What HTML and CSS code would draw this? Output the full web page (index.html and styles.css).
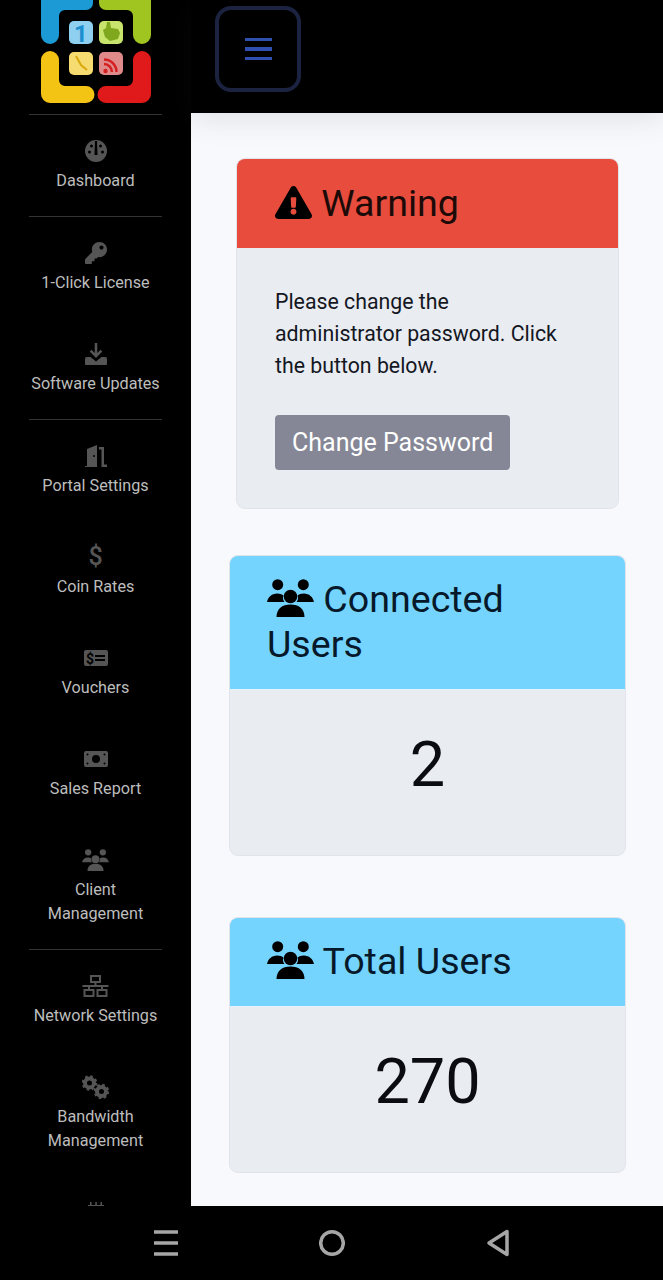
FILE: index.html
```html
<!DOCTYPE html>
<html lang="en">
<head>
<meta charset="UTF-8" />
<meta name="viewport" content="width=device-width, initial-scale=1.0" />
<title>Dashboard</title>
<link rel="stylesheet" href="styles.css">
</head>
<body>
<svg class="sprite" aria-hidden="true">
  <symbol id="users" viewBox="0 0 47 38">
    <circle cx="10.7" cy="5.7" r="5.5"/>
    <circle cx="36.3" cy="5.7" r="5.5"/>
    <circle cx="23.5" cy="17.5" r="6.8"/>
    <path d="M0 23C1 18 5 14.5 10 14.5c3 0 5 .7 6.500 2-1 2.500-.5 4.500 1 6.500z"/>
    <path d="M47 23C46 18 42 14.500 37 14.500c-3 0-5 .7-6.500 2 1 2.500.5 4.500-1 6.500z"/>
    <path d="M9.500 38C9.500 30 15 25.500 23.500 25.500S37.500 30 37.500 38z"/>
  </symbol>
</svg>
<div class="app">
  <aside class="sidebar">
    <svg class="logo" viewBox="0 0 110 104" width="110" height="104">
      <path fill="#1c9ad6" d="M0-20H52V3a7 7 0 0 1-7 7H24a6 6 0 0 0-6 6V35a9 9 0 0 1-18 0z"/>
      <path fill="#a0c520" d="M110-20H58V3a7 7 0 0 0 7 7H86a6 6 0 0 1 6 6V35a9 9 0 0 0 18 0z"/>
      <path fill="#f4c414" d="M0 60a9 9 0 0 1 18 0V80a6 6 0 0 0 6 6H45a8.500 8.500 0 0 1 0 17H9a9 9 0 0 1-9-9z"/>
      <path fill="#e01a1a" d="M110 60a9 9 0 0 0-18 0V80a6 6 0 0 1-6 6H65a8.500 8.500 0 0 0 0 17H101a9 9 0 0 0 9-9z"/>
      <rect x="28" y="21" width="24" height="23" rx="5" fill="#8fd0f0"/>
      <text x="40" y="42" class="logo-one">1</text>
      <rect x="58" y="21" width="24" height="23" rx="5" fill="#c8e46c"/>
      <path fill="#7fa81e" d="M62 30l3-2 1-6 3 0 1 6 7 1 2 4-2 6-8 2-5-4z"/>
      <rect x="28" y="52" width="24" height="23" rx="5" fill="#f6dc70"/>
      <path fill="none" stroke="#d8a80c" stroke-width="2" d="M35 56l5 9 6 5"/>
      <rect x="58" y="52" width="24" height="23" rx="5" fill="#e08a8a"/>
      <g fill="none" stroke="#d42020" stroke-width="2.500">
        <path d="M63 64a8 8 0 0 1 8 8"/>
        <path d="M63 59.500a12.500 12.500 0 0 1 12.500 12.500"/>
      </g>
      <circle cx="64.500" cy="71" r="2.200" fill="#d42020"/>
    </svg>
    <hr class="rule rule-first">

    <a class="item">
      <svg class="ico" viewBox="0 0 24 24">
        <circle cx="12" cy="12" r="11"/>
        <g fill="#000"><circle cx="5.500" cy="13" r="1.500"/><circle cx="7.500" cy="7" r="1.500"/><circle cx="16.500" cy="7" r="1.500"/><circle cx="18.500" cy="13" r="1.500"/></g>
        <path fill="#000" d="M11 2h2l.5 14h-3z"/>
      </svg>
      <span>Dashboard</span>
    </a>
    <hr class="rule">

    <a class="item">
      <svg class="ico ico-key" viewBox="0 0 512 512"><path d="M512 176.001C512 273.203 433.202 352 336 352c-11.22 0-22.19-1.062-32.827-3.069l-24.012 27.014A23.999 23.999 0 0 1 261.223 384H224v40c0 13.255-10.745 24-24 24h-40v40c0 13.255-10.745 24-24 24H24c-13.255 0-24-10.745-24-24v-78.059c0-6.365 2.529-12.47 7.029-16.971l161.802-161.802C163.108 213.814 160 195.271 160 176 160 78.798 238.797.001 335.999 0 433.488-.001 512 78.511 512 176.001zM336 128c0 26.51 21.49 48 48 48s48-21.49 48-48-21.49-48-48-48-48 21.49-48 48z"/></svg>
      <span>1-Click License</span>
    </a>

    <a class="item">
      <svg class="ico" viewBox="0 0 24 24">
        <path d="M10.700 1h2.600v10l3.200-3.200 1.800 1.800-6.300 6.300-6.300-6.300 1.800-1.800 3.200 3.200z"/>
        <path d="M1 17a2 2 0 0 1 2-2h3.500l5.500 4.500 5.500-4.500H21a2 2 0 0 1 2 2v5a1 1 0 0 1-1 1H2a1 1 0 0 1-1-1z"/>
      </svg>
      <span>Software Updates</span>
    </a>
    <hr class="rule">

    <a class="item">
      <svg class="ico" viewBox="0 0 24 24">
        <path d="M1 22h2V5l10-4v22H1zM15 3h5v17.500h3V23h-5.500V5.500H15z"/>
        <circle cx="10" cy="12" r="1" fill="#000"/>
      </svg>
      <span>Portal Settings</span>
    </a>

    <a class="item">
      <span class="ico ico-dollar">$</span>
      <span>Coin Rates</span>
    </a>

    <a class="item">
      <svg class="ico" viewBox="0 0 24 24">
        <rect x="0" y="4" width="24" height="16" rx="2"/>
        <text x="6" y="17.500" class="voucher-sign">$</text>
        <path fill="#000" d="M11 9h10v2H11zM11 13h10v2H11z"/>
      </svg>
      <span>Vouchers</span>
    </a>

    <a class="item">
      <svg class="ico" viewBox="0 0 24 24">
        <rect x="0" y="4" width="24" height="16" rx="2"/>
        <g fill="#000"><circle cx="12" cy="12" r="4"/><circle cx="3.500" cy="7.500" r="1"/><circle cx="20.500" cy="7.500" r="1"/><circle cx="3.500" cy="16.500" r="1"/><circle cx="20.500" cy="16.500" r="1"/></g>
      </svg>
      <span>Sales Report</span>
    </a>

    <a class="item">
      <svg class="ico ico-wide" viewBox="0 0 47 38"><use href="#users"/></svg>
      <span>Client<br>Management</span>
    </a>
    <hr class="rule">

    <a class="item">
      <svg class="ico ico-wide" viewBox="0 0 26 24">
        <g fill="none" stroke="#555" stroke-width="2">
          <rect x="8.500" y="2" width="9" height="6"/>
          <rect x="2" y="16" width="9" height="6"/>
          <rect x="15" y="16" width="9" height="6"/>
          <path d="M13 8v4M0 12h26M6.500 12v4M19.500 12v4"/>
        </g>
      </svg>
      <span>Network Settings</span>
    </a>

    <a class="item">
      <svg class="ico ico-wide" viewBox="0 0 26 24">
        <g fill="none" stroke="#555">
          <circle cx="7" cy="8" r="4.500" stroke-width="4"/>
          <circle cx="7" cy="8" r="6.500" stroke-width="2.500" stroke-dasharray="2.500 2.600"/>
          <circle cx="19" cy="16.500" r="4.500" stroke-width="4"/>
          <circle cx="19" cy="16.500" r="6.500" stroke-width="2.500" stroke-dasharray="2.500 2.600"/>
        </g>
      </svg>
      <span>Bandwidth<br>Management</span>
    </a>

    <a class="item">
      <svg class="ico" viewBox="0 0 24 24">
        <path d="M4 5h16v2H4zM6 2h1.500v3H6zM11.300 2h1.500v3h-1.500zM16.500 2H18v3h-1.500z"/>
      </svg>
    </a>
  </aside>

  <header class="topbar">
    <button class="menu-btn"><i></i><i></i><i></i></button>
  </header>

  <main class="content">
    <section class="card card-warning">
      <h2 class="card-head head-red">
        <svg class="head-ico ico-warn" viewBox="0 0 576 512"><path d="M569.517 440.013C587.975 472.007 564.806 512 527.94 512H48.054c-36.937 0-59.999-40.055-41.577-71.987L246.423 23.985c18.467-32.009 64.72-31.951 83.154 0l239.94 416.028zM288 354c-25.405 0-46 20.595-46 46s20.595 46 46 46 46-20.595 46-46-20.595-46-46-46zm-43.673-165.346l7.418 136c.347 6.364 5.609 11.346 11.982 11.346h48.546c6.373 0 11.635-4.982 11.982-11.346l7.418-136c.375-6.874-5.098-12.654-11.982-12.654h-63.383c-6.884 0-12.356 5.78-11.981 12.654z"/></svg>
        Warning
      </h2>
      <div class="warn-body">
        <p>Please change the administrator password. Click the button below.</p>
        <a class="btn">Change Password</a>
      </div>
    </section>

    <section class="card">
      <h2 class="card-head head-blue">
        <svg class="head-ico ico-users" viewBox="0 0 47 38"><use href="#users"/></svg>
        Connected Users
      </h2>
      <div class="stat-value">2</div>
    </section>

    <section class="card">
      <h2 class="card-head head-blue">
        <svg class="head-ico ico-users" viewBox="0 0 47 38"><use href="#users"/></svg>
        Total Users
      </h2>
      <div class="stat-value">270</div>
    </section>
  </main>

  <nav class="navbar">
    <svg class="nav-ico" viewBox="0 0 26 28">
      <path d="M1 3h24M1 14h24M1 25h24" fill="none" stroke="#a6a6a6" stroke-width="3.500"/>
    </svg>
    <svg class="nav-ico" viewBox="0 0 26 28">
      <circle cx="13" cy="14" r="11.300" fill="none" stroke="#a6a6a6" stroke-width="3.500"/>
    </svg>
    <svg class="nav-ico" viewBox="0 0 26 28">
      <path d="M22 2.500V25.500L4 14z" fill="none" stroke="#a6a6a6" stroke-width="3.500" stroke-linejoin="round"/>
    </svg>
  </nav>
</div>
</body>
</html>
```

FILE: styles.css
```css
html, body {
  margin: 0;
  height: 100%;
  overflow: hidden;
}
body {
  font-family: Roboto, "Liberation Sans", sans-serif;
  background-color: #000;
}
.sprite {
  display: none;
}
.app {
  display: grid;
  grid-template-columns: 191px 1fr;
  grid-template-rows: 113px 1093px 74px;
  height: 1280px;
}

/* sidebar */
.sidebar {
  grid-row: 1 / 3;
  overflow: hidden;
  background-color: #000;
  display: flex;
  flex-direction: column;
}
.logo {
  display: block;
  flex: none;
  margin: 0 auto 10px;
}
.logo-one {
  font-family: Roboto, sans-serif;
  font-size: 24px;
  font-weight: 700;
  fill: #1c8fd0;
  text-anchor: middle;
}
.rule {
  flex: none;
  width: 133px;
  height: 1px;
  margin: 0 0 0 29px;
  border: 0;
  background-color: #333;
}
.item {
  flex: none;
  display: flex;
  flex-direction: column;
  align-items: center;
  padding: 24px 0 23px;
  gap: 6px;
  font-size: 16.200px;
  line-height: 24px;
  color: #bdbdbd;
  text-align: center;
}
.ico {
  display: block;
  width: 24px;
  height: 24px;
  fill: #555;
}
.ico-key {
  padding: 1px;
  box-sizing: border-box;
}
.ico-wide {
  width: 27px;
}
.ico-dollar {
  font-size: 25px;
  line-height: 24px;
  color: #555;
  font-weight: 500;
  text-align: center;
}
.voucher-sign {
  font-family: Roboto, sans-serif;
  font-size: 14px;
  font-weight: 700;
  fill: #000;
  text-anchor: middle;
}

/* top bar */
.topbar {
  background-color: #000;
  padding: 6px 0 0 24px;
  position: relative;
  z-index: 1;
  box-shadow: 0 6px 28px rgba(58, 59, 69, 0.12);
}
.menu-btn {
  display: flex;
  flex-direction: column;
  justify-content: center;
  align-items: center;
  gap: 6px;
  box-sizing: border-box;
  width: 86px;
  height: 86px;
  padding: 0;
  background: none;
  border: 4px solid #1b2340;
  border-radius: 16px;
}
.menu-btn i {
  display: block;
  width: 27px;
  height: 3.500px;
  background-color: #3050b0;
}

/* main */
.content {
  background-color: #f8f9fc;
  padding: 45px 37px 0 38px;
  overflow: hidden;
}
.card {
  box-sizing: border-box;
  border: 1px solid #e1e4ec;
  border-radius: 9px;
  overflow: hidden;
  background-color: #e9ecf1;
  margin-bottom: 61px;
}
.card-warning {
  margin: 0 7px 46px;
}
.card-head {
  margin: 0;
  padding: 22px 37px;
  font-size: 37.600px;
  font-weight: 400;
  line-height: 45px;
}
.head-red {
  background-color: #e74c3c;
  color: #1c0a08;
  padding-left: 38px;
}
.head-blue {
  background-color: #74d4fe;
  color: #06192b;
  padding-top: 21px;
  border-bottom: 1px solid #e4f4fc;
}
.head-ico {
  fill: #000;
}
.ico-warn {
  width: 37px;
  height: 33px;
  vertical-align: -3px;
}
.ico-users {
  width: 47px;
  height: 38px;
  vertical-align: -5px;
}
.warn-body {
  padding: 38px 42px 38px 38px;
}
.warn-body p {
  margin: 0 0 33px;
  font-size: 21.300px;
  line-height: 32px;
  color: #14171f;
}
.btn {
  display: inline-block;
  padding: 0 17px;
  font-size: 25px;
  line-height: 55px;
  color: #fff;
  background-color: #858796;
  border-radius: 4px;
}
.stat-value {
  padding: 30px 0 45px;
  font-size: 63px;
  line-height: 90px;
  color: #0a0c12;
  text-align: center;
}

/* android buttons */
.navbar {
  grid-column: 1 / 3;
  display: flex;
  justify-content: center;
  align-items: center;
  gap: 140px;
  background-color: #000;
}
.nav-ico {
  width: 26px;
  height: 28px;
}
```
